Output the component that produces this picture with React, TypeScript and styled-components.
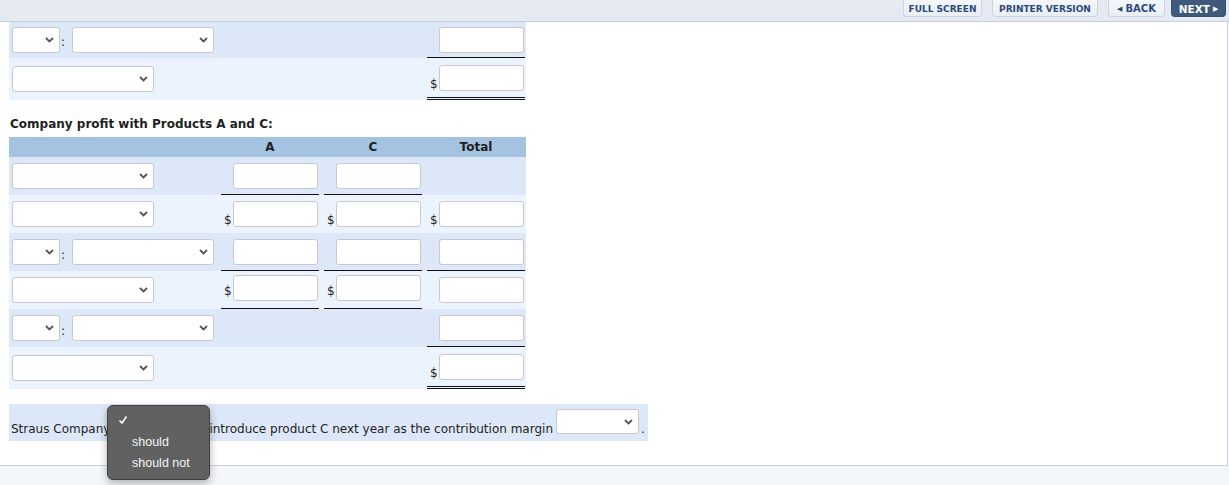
import React, { FC } from 'react';
import styled, { createGlobalStyle } from 'styled-components';

const GlobalStyle = createGlobalStyle`
  html, body {
    margin: 0;
    padding: 0;
    background: #f3f7fb;
  }
  body {
    font-family: 'DejaVu Sans', Verdana, sans-serif;
    font-size: 12px;
    color: #1f1f1f;
  }
`;

const Page = styled.div`
  width: 1229px;
  height: 485px;
  overflow: hidden;
  background: #f3f7fb;
`;

const TopBar = styled.div`
  height: 21px;
  background: #e5eaf2;
  border-bottom: 1px solid #c6cfdb;
  display: flex;
  justify-content: flex-end;
  align-items: flex-start;
  padding-right: 3px;
`;

const NavButton = styled.button<{ $primary?: boolean; $w: number; $gap: number; $size?: number }>`
  width: ${(p) => p.$w}px;
  height: 17px;
  margin: 0 0 0 ${(p) => p.$gap}px;
  padding: 1px 0 0;
  border: 1px solid ${(p) => (p.$primary ? '#34506f' : '#ccd5e1')};
  border-top: none;
  border-radius: 0 0 4px 4px;
  background: ${(p) => (p.$primary ? '#3d5a7a' : 'linear-gradient(#f4f7fb, #e9eef5)')};
  color: ${(p) => (p.$primary ? '#ffffff' : '#2a4a7a')};
  font-family: 'DejaVu Sans', Verdana, sans-serif;
  font-weight: bold;
  font-size: ${(p) => p.$size ?? 9}px;
  display: flex;
  align-items: center;
  justify-content: center;
  gap: 3px;
`;

const Arrow = styled.span`
  font-size: 7px;
`;

const Content = styled.div`
  width: 1218px;
  height: 443px;
  background: #ffffff;
  border-right: 1px solid #c9d1dc;
  border-bottom: 1px solid #c9d1dc;
  padding-left: 9px;
`;

const Table = styled.div`
  width: 517px;
`;

const Row = styled.div<{ $dark?: boolean; $h: number }>`
  display: grid;
  grid-template-columns: 212px 103px 103px 99px;
  height: ${(p) => p.$h}px;
  background: ${(p) => (p.$dark ? '#dce8f7' : '#ebf4fe')};
`;

const HeaderRow = styled.div`
  display: grid;
  grid-template-columns: 212px 103px 103px 99px;
  height: 20px;
  background: #a4c3e0;
  font-weight: bold;
  font-size: 12px;
  align-items: center;
`;

const HeaderCell = styled.div`
  width: 98px;
  text-align: center;
`;

const LabelCell = styled.div`
  display: flex;
  align-items: center;
  padding-left: 3px;
`;

const Colon = styled.span`
  width: 12px;
  align-self: flex-end;
  margin-bottom: 10px;
  padding-left: 1px;
  box-sizing: border-box;
  line-height: 12px;
`;

type Line = 'none' | 'single' | 'double';

const NumCell = styled.div<{ $line: Line; $lift?: boolean }>`
  width: 98px;
  box-sizing: border-box;
  display: flex;
  align-items: center;
  padding-bottom: ${(p) => (p.$lift ? 4 : 0)}px;
  border-bottom: ${(p) =>
    p.$line === 'single' ? '1px solid #111' : p.$line === 'double' ? '3px double #111' : 'none'};
`;

const Dollar = styled.span`
  width: 12px;
  padding-left: 3px;
  box-sizing: border-box;
  align-self: flex-end;
  line-height: 14px;
  font-size: 12px;
  transform: translateY(-6px);
`;

const Field = styled.input`
  width: 85px;
  height: 26px;
  margin: 0 0 0 12px;
  box-sizing: border-box;
  border: 1px solid #c9c9c9;
  border-radius: 3px;
  background: #ffffff;
  outline: none;
  ${Dollar} + & {
    margin-left: 0;
  }
`;

const SelectBox = styled.div<{ $w: number }>`
  position: relative;
  width: ${(p) => p.$w}px;
  height: 26px;
  box-sizing: border-box;
  border: 1px solid #c9c9c9;
  border-radius: 3px;
  background: #ffffff;
  display: inline-flex;
  align-items: center;
  justify-content: flex-end;
  padding-right: 5px;
  flex-shrink: 0;
`;

const Heading = styled.div`
  padding: 16px 0 5px 1px;
  line-height: 16px;
  font-weight: bold;
  font-size: 12px;
`;

const Sentence = styled.div`
  position: relative;
  width: 639px;
  height: 37px;
  box-sizing: border-box;
  margin-top: 15px;
  padding: 0 0 5px 2px;
  background: #dce8f7;
  display: flex;
  align-items: flex-end;
  white-space: pre;
  line-height: 14px;
`;

const InlineSelect = styled(SelectBox)<{ $end?: boolean }>`
  margin: 0 ${(p) => (p.$end ? 2 : 3)}px 2px 3px;
  height: 25px;
`;

const Popup = styled.div`
  position: absolute;
  left: 98px;
  top: 1px;
  width: 103px;
  height: 75px;
  box-sizing: border-box;
  background: #616162;
  border: 1px solid #3f3f40;
  border-radius: 6px;
  box-shadow: 0 3px 8px rgba(0, 0, 0, 0.3);
  font-family: 'Liberation Sans', Arial, sans-serif;
  font-size: 12.5px;
  color: #f4f4f4;
  padding: 5px 0 0 24px;
  white-space: nowrap;
`;

const PopItem = styled.div`
  position: relative;
  height: 21px;
  line-height: 21px;
`;

const Check = styled.svg`
  position: absolute;
  left: -14px;
  top: 4px;
`;

const Chevron: FC = () => (
  <svg width="9" height="6" viewBox="0 0 9 6">
    <polyline points="1,1 4.5,4.5 8,1" fill="none" stroke="#555" strokeWidth="1.8" />
  </svg>
);

const Select: FC<{ w: number }> = ({ w }) => (
  <SelectBox $w={w}>
    <Chevron />
  </SelectBox>
);

const Label: FC<{ pair?: boolean }> = ({ pair }) =>
  pair ? (
    <LabelCell>
      <Select w={48} />
      <Colon>:</Colon>
      <Select w={142} />
    </LabelCell>
  ) : (
    <LabelCell>
      <Select w={142} />
    </LabelCell>
  );

const Num: FC<{ line?: Line; dollar?: boolean; lift?: boolean }> = ({ line = 'none', dollar, lift }) => (
  <NumCell $line={line} $lift={lift}>
    {dollar && <Dollar>$</Dollar>}
    <Field />
  </NumCell>
);

const Blank = styled.div``;

const App: FC = () => (
  <Page>
    <GlobalStyle />
    <TopBar>
      <NavButton $w={79} $gap={0}>FULL SCREEN</NavButton>
      <NavButton $w={106} $gap={10}>PRINTER VERSION</NavButton>
      <NavButton $w={57} $gap={10} $size={10}>
        <Arrow>◀</Arrow>BACK
      </NavButton>
      <NavButton $primary $w={55} $gap={6} $size={10.5}>
        NEXT<Arrow>▶</Arrow>
      </NavButton>
    </TopBar>
    <Content>
      <Table>
        <Row $dark $h={36}>
          <Label pair />
          <Blank />
          <Blank />
          <Num line="single" />
        </Row>
        <Row $h={42}>
          <Label />
          <Blank />
          <Blank />
          <Num line="double" dollar />
        </Row>
      </Table>

      <Heading>Company profit with Products A and C:</Heading>

      <Table>
        <HeaderRow>
          <Blank />
          <HeaderCell>A</HeaderCell>
          <HeaderCell>C</HeaderCell>
          <HeaderCell>Total</HeaderCell>
        </HeaderRow>
        <Row $dark $h={38}>
          <Label />
          <Num line="single" />
          <Num line="single" />
          <Blank />
        </Row>
        <Row $h={38}>
          <Label />
          <Num dollar />
          <Num dollar />
          <Num dollar />
        </Row>
        <Row $dark $h={38}>
          <Label pair />
          <Num line="single" />
          <Num line="single" />
          <Num line="single" />
        </Row>
        <Row $h={38}>
          <Label />
          <Num line="single" dollar lift />
          <Num line="single" dollar lift />
          <Num />
        </Row>
        <Row $dark $h={38}>
          <Label pair />
          <Blank />
          <Blank />
          <Num line="single" />
        </Row>
        <Row $h={42}>
          <Label />
          <Blank />
          <Blank />
          <Num line="double" dollar />
        </Row>
      </Table>

      <Sentence>
        Straus Company
        <InlineSelect $w={93}>
          <Chevron />
        </InlineSelect>
        introduce product C next year as the contribution margin
        <InlineSelect $w={83} $end>
          <Chevron />
        </InlineSelect>
        .
        <Popup>
          <PopItem>
            <Check width="10" height="10" viewBox="0 0 10 10">
              <polyline points="1.5,5.5 4,8 8.5,1.5" fill="none" stroke="#fff" strokeWidth="1.6" />
            </Check>
          </PopItem>
          <PopItem>should</PopItem>
          <PopItem>should not</PopItem>
        </Popup>
      </Sentence>
    </Content>
  </Page>
);

export default App;
